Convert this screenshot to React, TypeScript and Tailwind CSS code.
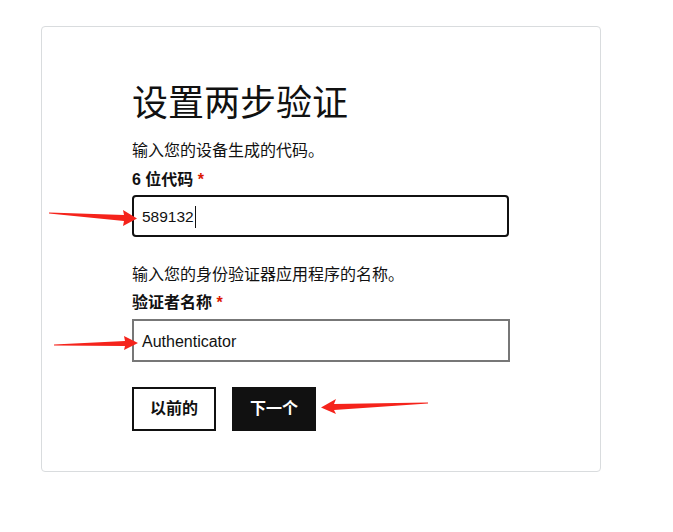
import React from 'react';

const font = { fontFamily: '"Liberation Sans", "Noto Sans CJK SC", sans-serif' };

function Arrows() {
  // red annotation arrows drawn over the screenshot
  return (
    <svg className="pointer-events-none absolute left-0 top-0" width="673" height="532" viewBox="0 0 673 532">
      <g fill="#f5231b">
        <polygon points="49,212.5 124,215 123,210 137,218.5 123,226 124,221 49,213.5" />
        <polygon points="54,344.5 125,341 124,336 138,343 124,350 125,346 54,345.5" />
        <polygon points="428,402.5 334,404 336,399 321,407.5 336,414 334,410 428,403.5" />
      </g>
    </svg>
  );
}

export default function App() {
  return (
    <div className="relative h-[532px] w-[673px] bg-white pl-[41px] pt-[26px] text-[#111]" style={font}>
      <div className="h-[446px] w-[560px] rounded-[4px] border border-[#d9dcde] pl-[90px] pt-[55px]">
        <h1 className="text-[36px] leading-[44px] font-normal">设置两步验证</h1>
        <p className="mt-[15px] text-[16px] leading-[20px]">输入您的设备生成的代码。</p>
        <label className="mt-[9px] block text-[16px] font-bold leading-[20px]">
          6 位代码 <span className="text-[#db1802]">*</span>
        </label>
        <div className="mt-[5px] flex h-[42px] w-[377px] items-center rounded-[4px] border-2 border-[#111] pl-[8px] pt-[1px] text-[15.5px]">
          <span>589132</span>
          <span className="ml-[1px] h-[22px] w-px bg-[#111]" />
        </div>
        <p className="mt-[28px] text-[16px] leading-[20px]">输入您的身份验证器应用程序的名称。</p>
        <label className="mt-[8px] block text-[16px] font-bold leading-[20px]">
          验证者名称 <span className="text-[#db1802]">*</span>
        </label>
        <div className="mt-[6px] flex h-[43px] w-[378px] items-center border-2 border-[#777] pl-[8px] pt-[3px] text-[16px]">
          Authenticator
        </div>
        <div className="mt-[25px] flex gap-[16px]">
          <button className="h-[44px] w-[84px] border-2 border-[#111] bg-white text-[16px] font-bold">以前的</button>
          <button className="h-[44px] w-[84px] bg-[#111] text-[16px] font-bold text-white">下一个</button>
        </div>
      </div>
      <Arrows />
    </div>
  );
}
